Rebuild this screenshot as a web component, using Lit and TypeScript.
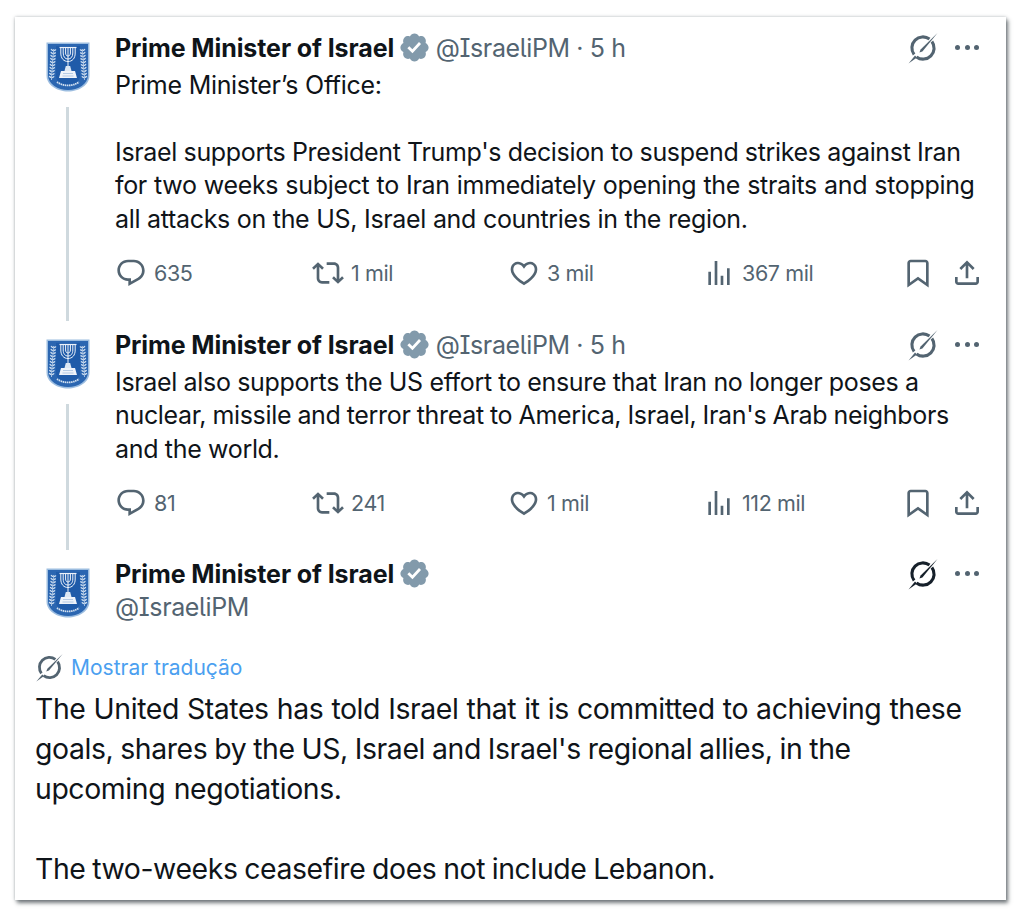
import { LitElement, html, css, svg } from "lit";
import { customElement } from "lit/decorators.js";
import { styleMap } from "lit/directives/style-map.js";

const icon = (d: string, cls = "ic") => html`<svg class=${cls} viewBox="0 0 24 24" aria-hidden="true"><path d=${d}></path></svg>`;
const P = {
  reply: "M1.751 10c0-4.42 3.584-8 8.005-8h4.366c4.49 0 8.129 3.64 8.129 8.13 0 2.96-1.607 5.68-4.196 7.11l-8.054 4.46v-3.69h-.067c-4.49.1-8.183-3.51-8.183-8.01zm8.005-6c-3.317 0-6.005 2.69-6.005 6 0 3.37 2.77 6.08 6.138 6.01l.351-.01h1.761v2.3l5.087-2.81c1.951-1.08 3.163-3.13 3.163-5.36 0-3.39-2.744-6.13-6.129-6.13H9.756z",
  rt: "M4.5 3.88l4.432 4.14-1.364 1.46L5.5 7.55V16c0 1.1.896 2 2 2H13v2H7.5c-2.209 0-4-1.79-4-4V7.55L1.432 9.48.068 8.02 4.5 3.88zM16.5 6H11V4h5.5c2.209 0 4 1.79 4 4v8.45l2.068-1.93 1.364 1.46-4.432 4.14-4.432-4.14 1.364-1.46 2.068 1.93V8c0-1.1-.896-2-2-2z",
  like: "M16.697 5.5c-1.222-.06-2.679.51-3.89 2.16l-.805 1.09-.806-1.09C9.984 6.01 8.526 5.44 7.304 5.5c-1.243.07-2.349.78-2.91 1.91-.552 1.12-.633 2.78.479 4.82 1.074 1.97 3.257 4.27 7.129 6.61 3.87-2.34 6.052-4.64 7.126-6.61 1.111-2.04 1.03-3.7.477-4.82-.561-1.13-1.666-1.84-2.908-1.91zm4.187 7.69c-1.351 2.48-4.001 5.12-8.379 7.67l-.503.3-.504-.3c-4.379-2.55-7.029-5.19-8.382-7.67-1.36-2.5-1.41-4.86-.514-6.67.887-1.79 2.647-2.91 4.601-3.01 1.651-.09 3.368.56 4.798 2.01 1.429-1.45 3.146-2.1 4.796-2.01 1.954.1 3.714 1.22 4.601 3.01.896 1.81.846 4.17-.514 6.67z",
  views: "M8.75 21V3h2v18h-2zM18 21V8.5h2V21h-2zM4 21l.004-10h2L6 21H4zm9.248 0v-7h2v7h-2z",
  mark: "M4 4.5C4 3.12 5.119 2 6.5 2h11C18.881 2 20 3.12 20 4.5v18.44l-8-5.71-8 5.71V4.5zM6.5 4c-.276 0-.5.22-.5.5v14.56l6-4.29 6 4.29V4.5c0-.28-.224-.5-.5-.5h-11z",
  share: "M12 2.59l5.7 5.7-1.41 1.42L13 6.41V16h-2V6.41l-3.3 3.3-1.41-1.42L12 2.59zM21 15l-.02 3.51c0 1.38-1.12 2.49-2.5 2.49H5.5C4.11 21 3 19.88 3 18.5V15h2v3.5c0 .28.22.5.5.5h12.98c.28 0 .5-.22.5-.5L19 15h2z",
  badge: "M22.25 12c0-1.43-.88-2.67-2.19-3.34.46-1.39.2-2.9-.81-3.91s-2.52-1.27-3.91-.81c-.66-1.31-1.91-2.19-3.34-2.19s-2.67.88-3.33 2.19c-1.4-.46-2.91-.2-3.92.81s-1.26 2.52-.8 3.91c-1.31.67-2.2 1.91-2.2 3.34s.89 2.67 2.2 3.34c-.46 1.39-.21 2.9.8 3.91s2.52 1.26 3.91.81c.67 1.31 1.91 2.19 3.34 2.19s2.68-.88 3.34-2.19c1.39.45 2.9.2 3.91-.81s1.27-2.52.81-3.91c1.31-.67 2.19-1.91 2.19-3.34zm-11.71 4.2L6.8 12.46l1.41-1.42 2.26 2.26 4.8-5.23 1.47 1.36-6.2 6.77z",
};

const grok = (cls: string) => html`<svg class=${cls} viewBox="0 0 32 32" aria-hidden="true">
  <path fill="none" stroke="currentColor" stroke-width="3.1" d="M22.5 7.1A11 11 0 0 0 7.100 22.500M9.500 24.900A11 11 0 0 0 24.900 9.500"></path>
  <path d="M30.500 1 L13.600 17.400 12.400 20.400 15.400 19.400Z"></path>
  <path d="M1.500 31.500 L8 23.600 10 25.400Z"></path>
</svg>`;

const leaves = (x: number, flip: number) => svg`<g transform="translate(${x} 0) scale(${flip} 1)" fill="#cfdff0">
  <rect x="-.3" y="7" width=".6" height="31" fill="#eef4fa"></rect>
  ${[8, 11, 14, 17, 20, 23, 26, 29, 32, 35].map((y) => svg`<ellipse cx="-1.5" cy=${y} rx="1.5" ry=".7" transform="rotate(35 -1.5 ${y})"></ellipse><ellipse cx="1.5" cy=${y} rx="1.5" ry=".7" transform="rotate(-35 1.500 ${y})"></ellipse>`)}
</g>`;

const emblem = () => html`<svg class="emblem" viewBox="0 0 44 50" aria-hidden="true">
  <path d="M.5 .5h43v33C43.500 43 33 49.500 22 49.500S.5 43 .5 33.500Z" fill="#9cbde0"></path>
  <path d="M2 2h40v31c0 9-10 15-20 15S2 42 2 33Z" fill="#2b66b1"></path>
  ${svg`<path d="M10 4h24v30c0 5-5 9-12 9s-12-4-12-9Z" fill="#1f5ba9"></path>
  <g fill="none" stroke="#eef3fa" stroke-width="1">
    <path d="M22 6v20"></path>
    <path d="M19.600 6v5c0 2 1 3 2.400 3s2.400-1 2.400-3V6"></path>
    <path d="M17.200 6v5c0 4 2 6 4.800 6s4.800-2 4.800-6V6"></path>
    <path d="M14.800 6v5c0 5.500 3 8.500 7.200 8.500s7.200-3 7.200-8.500V6"></path>
  </g>
  <path d="M13.500 5.500h17" stroke="#eef3fa" stroke-width="1.200"></path>
  <path d="M19.800 24h4.400l1.300 5h-7Z" fill="#dde8f4"></path>
  <path d="M15 29h14l2 7H13Z" fill="#eef3fa"></path>
  <path d="M17 31.500h10M16.500 34h11" stroke="#8fb0d6" stroke-width=".6"></path>
  <path d="M11 40c6 4.500 16 4.500 22 0" fill="none" stroke="#d5e2f1" stroke-width="1.800" stroke-dasharray="1.500 .6"></path>
  <g transform="rotate(4 6 22)">${leaves(6.5, 1)}</g><g transform="rotate(-4 38 22)">${leaves(37.5, -1)}</g>`}
</svg>`;

const stat = (d: string, n: string) => html`<div class="stat">${icon(d)}<span>${n}</span></div>`;

const head = (time: boolean) => html`<div class="hd">
  <span class="name">Prime Minister of Israel</span>
  ${icon(P.badge, "badge")}
  ${time ? html`<span class="meta"><span class="at">@IsraeliPM</span> · 5 h</span>` : ""}
  <span class="sp"></span>
  ${grok(time ? "grok" : "grok dark")}
  <span class="more"><i></i><i></i><i></i></span>
</div>`;

const actions = (a: string, b: string, c: string, d: string) => html`<div class="acts">
  ${stat(P.reply, a)}${stat(P.rt, b)}${stat(P.like, c)}${stat(P.views, d)}
  <div class="end">${icon(P.mark)}${icon(P.share)}</div>
</div>`;

/* Each line: text and the word spacing that fits it to the reference's line width. */
const lines = (rows: [string, number][]) => rows.map(([t, ws]) =>
  t ? html`<span class="ln" style=${styleMap({ wordSpacing: `${ws}px` })}>${t}</span>` : html`<span class="ln">&nbsp;</span>`);

@customElement("app-root")
export class AppRoot extends LitElement {
  static styles = css`
    :host { display: block; height: 916px; background: #fff; padding: 17px 18px 0 15px; box-sizing: border-box; font-family: Inter, "Liberation Sans", sans-serif; color: #0f1419; }
    .card { height: 883px; box-sizing: border-box; background: #fff; padding: 14px 23px 0 20px; box-shadow: 0 0 3px rgba(90,100,105,.4), 2px 3px 4px rgba(60,68,72,.7); }
    .tweet { display: grid; grid-template-columns: 65px 1fr; column-gap: 15px; }
    .t1 { height: 297px; }
    .t2 { height: 229px; }
    .t3 { height: 66px; }
    .side { display: flex; flex-direction: column; align-items: center; padding-top: 11px; }
    .emblem { width: 44px; height: 50px; flex: none; }
    .line { width: 3px; background: #cfd9de; margin-top: 15px; flex: 1; margin-bottom: 7px; }
    .hd { display: flex; align-items: center; height: 33px; font-size: 25px; }
    .name { font-weight: 700; letter-spacing: -.1px; color: #0f1419; white-space: nowrap; }
    .badge { width: 33px; height: 33px; fill: #829aab; margin-left: 3.5px; background: radial-gradient(circle, #fff 0 36%, transparent 38%); flex: none; }
    .meta { color: #536471; margin-left: 5px; letter-spacing: -.38px; white-space: nowrap; }
    .at, .handle { font-feature-settings: "cv08", "ss02"; }
    .sp { flex: 1; }
    .grok { width: 32px; height: 32px; color: #536471; fill: #536471; flex: none; }
    .grok.dark { color: #16202a; fill: #16202a; }
    .more { display: flex; gap: 4.5px; margin-left: 16.5px; margin-right: 4px; width: 24px; flex: none; }
    .more i { width: 5px; height: 5px; border-radius: 50%; background: #536471; flex: none; }
    .txt { font-size: 25px; line-height: 33.5px; letter-spacing: -.33px; margin: 4.5px 0 0; }
    .ln { display: block; white-space: nowrap; }
    .acts { display: grid; grid-template-columns: 197px 196px 195px 1fr auto; height: 40px; align-items: center; margin-top: 17px; }
    .stat { display: flex; align-items: center; gap: 7px; font-size: 21.5px; letter-spacing: -.4px; color: #536471; }
    .ic { width: 32px; height: 32px; fill: #536471; flex: none; }
    .end { display: flex; gap: 17px; }
    .handle { font-size: 25px; line-height: 33px; margin-top: 1px; color: #536471; letter-spacing: -.4px; }
    .trans { display: flex; align-items: center; gap: 7px; height: 32px; margin-top: 28px; font-size: 21px; color: #4b9ff0; }
    .trans .grok { width: 29px; height: 29px; }
    .big { font-size: 28.4px; line-height: 40px; letter-spacing: -.4px; margin: 6px 0 0; }
  `;
  render() {
    return html`<main class="card">
      <section class="tweet t1">
        <div class="side">${emblem()}<div class="line"></div></div>
        <div>${head(true)}
          <p class="txt">${lines([
            ["Prime Minister’s Office:", 0.3],
            ["", 0],
            ["Israel supports President Trump's decision to suspend strikes against Iran", -0.2],
            ["for two weeks subject to Iran immediately opening the straits and stopping", 0.45],
            ["all attacks on the US, Israel and countries in the region.", 0.2],
          ])}</p>
          ${actions("635", "1 mil", "3 mil", "367 mil")}
        </div>
      </section>
      <section class="tweet t2">
        <div class="side">${emblem()}<div class="line"></div></div>
        <div>${head(true)}
          <p class="txt">${lines([
            ["Israel also supports the US effort to ensure that Iran no longer poses a", -0.1],
            ["nuclear, missile and terror threat to America, Israel, Iran's Arab neighbors", -0.45],
            ["and the world.", 0],
          ])}</p>
          ${actions("81", "241", "1 mil", "112 mil")}
        </div>
      </section>
      <section class="tweet t3">
        <div class="side">${emblem()}</div>
        <div>${head(false)}<div class="handle">@IsraeliPM</div></div>
      </section>
      <div class="trans">${grok("grok")}<span>Mostrar tradução</span></div>
      <p class="big">${lines([
        ["The United States has told Israel that it is committed to achieving these", 0.5],
        ["goals, shares by the US, Israel and Israel's regional allies, in the", -0.65],
        ["upcoming negotiations.", 1],
        ["", 0],
        ["The two-weeks ceasefire does not include Lebanon.", -0.85],
      ])}</p>
    </main>`;
  }
}
